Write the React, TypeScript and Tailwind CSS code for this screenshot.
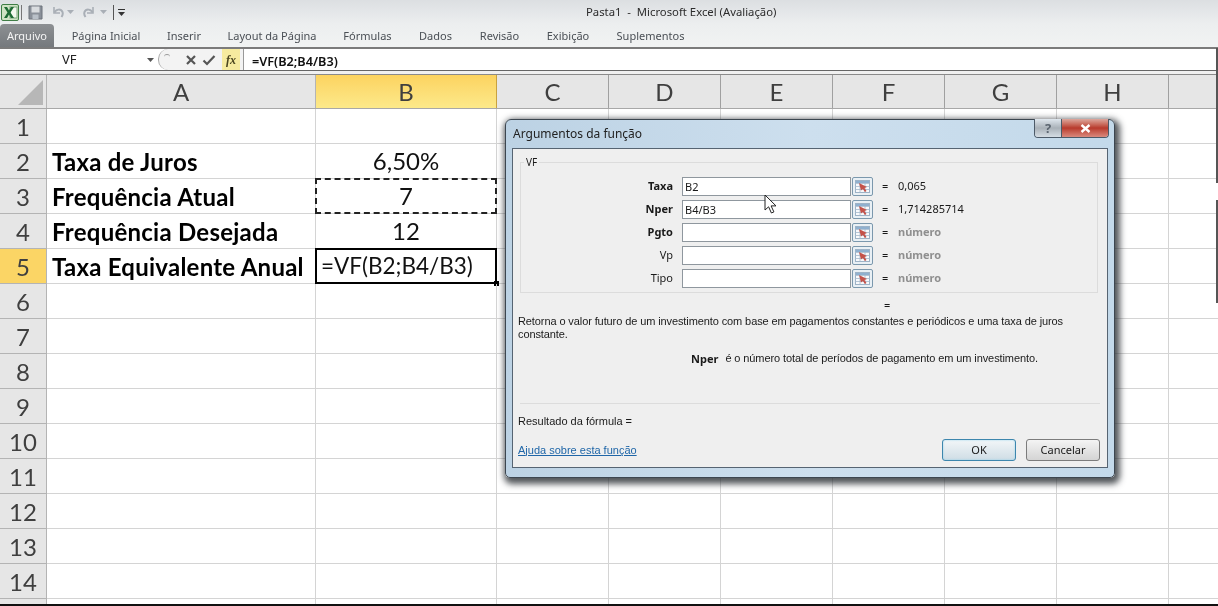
const columns = ['C', 'D', 'E', 'F', 'G', 'H'];

const tabs = [
  { label: 'Página Inicial', width: 'w-[96px]' },
  { label: 'Inserir', width: 'w-[60px]' },
  { label: 'Layout da Página', width: 'w-[116px]' },
  { label: 'Fórmulas', width: 'w-[75px]' },
  { label: 'Dados', width: 'w-[61px]' },
  { label: 'Revisão', width: 'w-[67px]' },
  { label: 'Exibição', width: 'w-[70px]' },
  { label: 'Suplementos', width: 'w-[95px]' },
];

const labels: Record<number, string> = {
  2: 'Taxa de Juros',
  3: 'Frequência Atual',
  4: 'Frequência Desejada',
  5: 'Taxa Equivalente Anual',
};

const values: Record<number, string> = { 2: '6,50%', 3: '7', 4: '12' };

const args = [
  { name: 'Taxa', bold: true, value: 'B2', result: '0,065' },
  { name: 'Nper', bold: true, value: 'B4/B3', result: '1,714285714' },
  { name: 'Pgto', bold: true, value: '', result: 'número' },
  { name: 'Vp', bold: false, value: '', result: 'número' },
  { name: 'Tipo', bold: false, value: '', result: 'número' },
];

const rows = Array.from({ length: 15 }, (_, i) => i + 1);

function ExcelLogo() {
  return (
    <svg width="18" height="17" viewBox="0 0 18 17">
      <rect x="0.5" y="0.5" width="17" height="16" rx="1.5" fill="#cfe3c4" stroke="#3f7d45" />
      <rect x="9" y="3" width="7" height="11" fill="#f4f8ef" stroke="#7aa77d" />
      <path d="M3 3h3l2 3.6L10 3h3l-3.5 5.5L13 14h-3l-2-3.6L6 14H3l3.5-5.5z" fill="#1f6b34" />
    </svg>
  );
}

function SaveIcon() {
  return (
    <svg width="15" height="15" viewBox="0 0 15 15">
      <path d="M1 1h13v13H1z" fill="#8a9099" stroke="#6c737b" />
      <rect x="3.5" y="1.5" width="8" height="6" fill="#d9dcdf" />
      <rect x="4.5" y="9.5" width="6" height="4.5" fill="#b9c0c8" />
    </svg>
  );
}

function UndoIcon({ flip = false }: { flip?: boolean }) {
  return (
    <svg width="13" height="13" viewBox="0 0 13 13" className={flip ? '-scale-x-100' : ''}>
      <path d="M3 1v6h6" fill="none" stroke="#a9afb6" strokeWidth="1.6" />
      <path d="M3.5 6.5C5 3 10 2.5 11.5 6c.6 1.6.2 3.2-1 5" fill="none" stroke="#a9afb6" strokeWidth="2" />
    </svg>
  );
}

function SmallArrow({ color = '#a9afb6' }: { color?: string }) {
  return (
    <svg width="7" height="4" viewBox="0 0 7 4">
      <path d="M0 0h7L3.5 4z" fill={color} />
    </svg>
  );
}

function RefButton() {
  return (
    <div className="ml-px flex h-[19px] w-[21px] items-center justify-center rounded-[2px] border border-[#7b98ad] bg-[#e9f0f5]">
      <svg width="15" height="13" viewBox="0 0 15 13">
        <rect x="0.5" y="0.5" width="14" height="12" fill="#f8f9fb" stroke="#9db2c6" />
        <path d="M0 3.5h15M0 6.5h15M0 9.5h15M5 0v13M10 0v13" stroke="#a3b8cc" strokeWidth="0.8" />
        <rect x="1" y="1" width="13" height="2" fill="#8fb0cf" />
        <path d="M4 3l8 4-2.5 1 2 3-1.6 1-2-3L6 10.5z" fill="#c4524a" />
      </svg>
    </div>
  );
}

function Cursor() {
  return (
    <svg width="13" height="21" viewBox="0 0 13 21" className="absolute left-[251px] top-[45px]">
      <path d="M1 1v15l3.6-3.2L7.4 19l2.5-1.1-2.8-6H12z" fill="#fff" stroke="#222" strokeWidth="1" />
    </svg>
  );
}

function Dialog() {
  return (
    <div className="absolute left-[505px] top-[119px] flex h-[359px] w-[610px] flex-col rounded-t-[6px] rounded-b-[5px] border border-[#3c4650] bg-gradient-to-r from-[#bcd2e4] via-[#cddfee] to-[#c3d9ea] px-[6px] pb-[9px] shadow-[2px_3px_6px_3px_rgba(40,45,50,0.8)] font-['Noto_Sans',sans-serif] text-[#1a1a1a]">
      <div className="flex h-[28px] shrink-0 items-start">
        <div className="pl-[1px] pt-[5px] text-[12px] leading-[17px] text-[#222]">Argumentos da função</div>
        <div className="-mt-px ml-auto mr-[-1px] flex h-[19px] overflow-hidden rounded-b-[4px] border border-t-0 border-[#4c5a68]">
          <div className="flex w-[27px] items-center justify-center border-r border-[#4c5a68] bg-gradient-to-b from-[#dfe7ee] via-[#a9b1b8] to-[#d5dde4] text-[13px] font-bold leading-none text-[#5b6570]">
            ?
          </div>
          <div className="flex w-[46px] items-center justify-center bg-gradient-to-b from-[#dba79e] via-[#b8392c] to-[#d9897d]">
            <svg width="11" height="9" viewBox="0 0 11 9">
              <path d="M1.5 1l8 7M9.5 1l-8 7" stroke="#fff" strokeWidth="2.4" />
            </svg>
          </div>
        </div>
      </div>
      <div className="relative flex min-h-0 flex-1 flex-col border border-[#566472] bg-[#efefef] text-[11px]">
        <div className="relative ml-[7px] mt-[13px] h-[131px] w-[578px] border border-[#dcdcdc] pt-[14px]">
          <div className="absolute -top-[7px] left-[3px] bg-[#efefef] px-[2px] text-[10px] leading-[13px]">VF</div>
          <div className="flex flex-col gap-[4px]">
            {args.map((arg) => (
              <div key={arg.name} className="flex h-[19px] items-center">
                <div className={`w-[152px] text-right ${arg.bold ? 'font-bold' : ''}`}>{arg.name}</div>
                <div className="ml-[9px] h-[19px] w-[169px] border border-[#8f979e] bg-white pl-[2px] leading-[18px]">{arg.value}</div>
                <RefButton />
                <div className="ml-[9px] w-[16px]">=</div>
                <div className={arg.value ? '' : 'font-bold text-[#8f8f8f]'}>{arg.result}</div>
              </div>
            ))}
          </div>
        </div>
        <div className="h-[22px] pl-[371px] pt-[4px] leading-[15px]">=</div>
        <div className="px-[5px] font-['Liberation_Sans',sans-serif] leading-[13px] tracking-[-0.1px]">
          Retorna o valor futuro de um investimento com base em pagamentos constantes e periódicos e uma taxa de juros constante.
        </div>
        <div className="mt-[11px] flex pl-[178px] font-['Liberation_Sans',sans-serif] leading-[13px] tracking-[-0.1px]">
          <span className="font-['Noto_Sans',sans-serif] font-bold tracking-normal">Nper</span>
          <span className="ml-[7px]">é o número total de períodos de pagamento em um investimento.</span>
        </div>
        <div className="mx-[7px] mt-[38px] border-t border-[#dcdcdc]"></div>
        <div className="mt-[10px] px-[5px] font-['Liberation_Sans',sans-serif] leading-[14px]">Resultado da fórmula =</div>
        <div className="mt-[11px] flex items-center pl-[5px] pr-[7px]">
          <a className="font-['Liberation_Sans',sans-serif] text-[#1f66a8] underline">Ajuda sobre esta função</a>
          <button className="ml-auto h-[22px] w-[74px] rounded-[3px] border border-[#3d86ad] bg-gradient-to-b from-[#f2f6f8] to-[#cfdde5] shadow-[inset_0_0_2px_#8fd0ea]">OK</button>
          <button className="ml-[10px] h-[22px] w-[74px] rounded-[3px] border border-[#7c7c7c] bg-gradient-to-b from-[#f4f4f4] to-[#d4d4d4]">Cancelar</button>
        </div>
        <Cursor />
      </div>
    </div>
  );
}

export default function App() {
  return (
    <div className="relative h-[606px] w-[1218px] overflow-hidden bg-white blur-[0.3px]">
      {/* title + tabs */}
      <div className="h-[47px] bg-gradient-to-b from-[#dcdfe2] via-[#eceeef] to-[#f1f3f3] font-['Noto_Sans',sans-serif]">
        <div className="relative flex h-[24px] items-center pl-[1px]">
          <ExcelLogo />
          <div className="ml-[2px] h-[15px] w-px bg-[#777]"></div>
          <div className="ml-[6px]"><SaveIcon /></div>
          <div className="ml-[8px]"><UndoIcon /></div>
          <div className="ml-[3px]"><SmallArrow /></div>
          <div className="ml-[9px]"><UndoIcon flip /></div>
          <div className="ml-[4px]"><SmallArrow /></div>
          <div className="ml-[6px] h-[15px] w-px bg-[#555]"></div>
          <div className="ml-[4px] flex flex-col gap-[2px]">
            <div className="h-px w-[7px] bg-[#333]"></div>
            <SmallArrow color="#333" />
          </div>
          <div className="absolute left-[586px] top-[3px] whitespace-pre text-[11.3px] leading-[17px] text-[#2c2c2c]">Pasta1  -  Microsoft Excel (Avaliação)</div>
        </div>
        <div className="flex h-[23px]">
          <div className="flex w-[54px] items-center justify-center rounded-t-[4px] bg-gradient-to-b from-[#8d9093] to-[#75797d] pt-[2px] text-[11px] text-[#f4f4f4]">Arquivo</div>
          <div className="flex pl-[4px]">
            {tabs.map((tab) => (
              <div key={tab.label} className={`flex items-center justify-center pt-[2px] text-[11px] text-[#4a4f55] ${tab.width}`}>
                {tab.label}
              </div>
            ))}
          </div>
        </div>
      </div>

      {/* formula bar */}
      <div className="flex h-[24px] border-b border-t-2 border-b-[#666] border-t-[#7b7b7b] bg-white font-['Noto_Sans',sans-serif]">
        <div className="flex w-[158px] items-center pl-[62px] pt-px text-[13px] text-[#222]">
          <span>VF</span>
          <div className="ml-auto mr-[4px]"><SmallArrow color="#555" /></div>
        </div>
        <div className="flex w-[85px] items-center rounded-l-[10px] border-l border-[#aaa] bg-[#f3f3f3]">
          <div className="ml-[5px] mt-[-6px] h-[6px] w-[6px] rounded-full border-t border-[#999]"></div>
          <svg width="12" height="12" viewBox="0 0 12 12" className="ml-[15px]">
            <path d="M2 2l8 8M10 2l-8 8" stroke="#555" strokeWidth="2.2" />
          </svg>
          <svg width="14" height="12" viewBox="0 0 14 12" className="ml-[5px]">
            <path d="M1.5 6.5L5 10l7.5-8" fill="none" stroke="#555" strokeWidth="2.2" />
          </svg>
          <div className="ml-[6px] flex h-full w-[18px] items-center justify-center bg-[#f6eb9f] font-['Liberation_Serif',serif] text-[12px] font-bold italic text-[#4b4620]">fx</div>
        </div>
        <div className="flex-1 border-l border-[#999] pl-[8px] pt-[1.5px] text-[12.7px] font-semibold leading-[20px] text-[#111]">=VF(B2;B4/B3)</div>
      </div>

      {/* grid */}
      <div className="bg-[#f0f0f0] pt-[3px]">
        <div className="flex h-[532px] flex-col overflow-hidden border-b-2 border-t border-b-[#111] border-t-[#8a8a8a] bg-white font-['Lato',sans-serif]">
          <div className="flex h-[34px] shrink-0 border-b border-[#a8a8a8] bg-[#e6e6e6] text-[24px] font-normal text-[#3f3f3f]">
            <div className="flex w-[47px] items-end justify-end border-r border-[#b4b4b4] p-[3px]">
              <div className="h-0 w-0 border-b-[25px] border-l-[25px] border-b-[#b7b7b7] border-l-transparent"></div>
            </div>
            <div className="flex w-[269px] items-center justify-center border-r border-[#b4b4b4]">A</div>
            <div className="flex w-[181px] items-center justify-center border-r border-[#c9a23f] bg-gradient-to-b from-[#fcd35f] to-[#fce98a]">B</div>
            {columns.map((col) => (
              <div key={col} className="flex w-[112px] items-center justify-center border-r border-[#a0a0a0]">
                {col}
              </div>
            ))}
            <div className="flex-1"></div>
          </div>
          {rows.map((row) => (
            <div key={row} className="flex h-[35px] shrink-0">
              <div className={`flex w-[47px] items-center justify-center border-b border-r border-[#b4b4b4] pt-[2px] text-[24px] text-[#3f3f3f] ${row === 5 ? 'bg-[#fbd565]' : 'bg-[#e6e6e6]'}`}>
                {row < 15 ? row : ''}
              </div>
              <div className="flex w-[269px] items-center whitespace-nowrap border-b border-r border-[#d4d4d4] pl-[5px] pt-px text-[24px] font-bold tracking-[0.25px] text-black">
                {labels[row]}
              </div>
              <div className="relative flex w-[181px] items-center justify-center border-b border-r border-[#d4d4d4] text-[24px] text-[#111]">
                {row === 3 && <div className="absolute -left-px -top-px bottom-[-1px] right-[-1px] border-2 border-dashed border-[#222]"></div>}
                {row === 5 && (
                  <>
                    <div className="absolute -left-px -top-px bottom-[-1px] right-[-1px] border-2 border-black"></div>
                    <div className="absolute -bottom-[3px] -right-[3px] h-[5px] w-[5px] bg-black"></div>
                    <div className="w-full pl-[5px] text-left text-[22.5px]">=VF(B2;B4/B3)</div>
                  </>
                )}
                {row !== 5 && values[row]}
              </div>
              {columns.map((col) => (
                <div key={col} className="w-[112px] border-b border-r border-[#d4d4d4]"></div>
              ))}
              <div className="flex-1 border-b border-[#d4d4d4]"></div>
            </div>
          ))}
        </div>
      </div>

      <Dialog />

      {/* edge of the recording */}
      <div className="absolute right-0 top-[48px] h-[135px] w-[2px] bg-[#555]"></div>
      <div className="absolute right-0 top-[200px] h-[103px] w-[2px] bg-[#555]"></div>
    </div>
  );
}
